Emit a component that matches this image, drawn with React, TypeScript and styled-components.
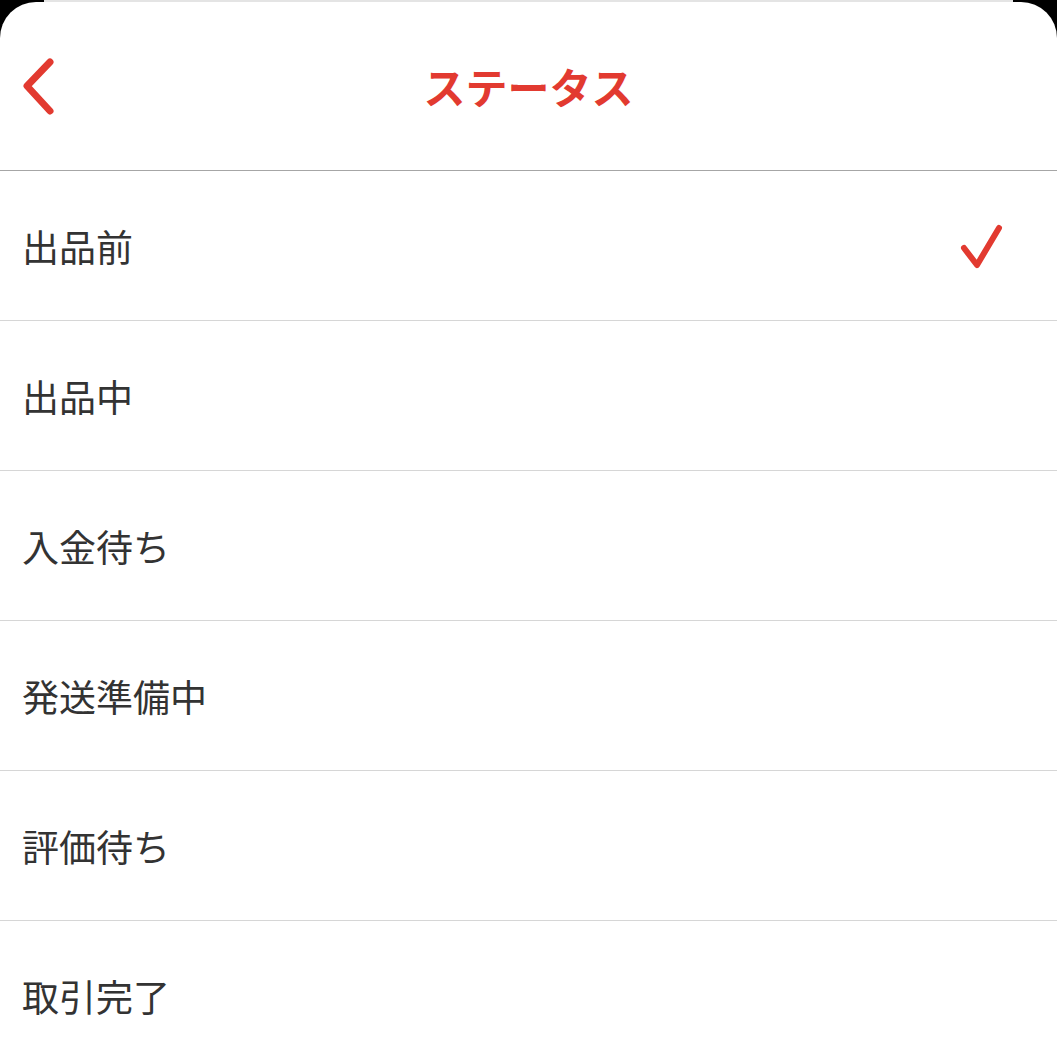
import styled, { createGlobalStyle } from "styled-components";

const RED = "#e23a30";

const statuses = ["出品前", "出品中", "入金待ち", "発送準備中", "評価待ち", "取引完了"];

const GlobalStyle = createGlobalStyle`
  html, body {
    margin: 0;
    padding: 0;
    background: #000;
  }
  body {
    font-family: "Noto Sans CJK JP", "Noto Sans", sans-serif;
  }
`;

export default function App() {
  const selected = 0;
  return (
    <>
      <GlobalStyle />
      <Screen>
        <BackSheet />
        <Sheet>
          <Header>
            <BackButton aria-label="back">
              <svg width="40" height="64" viewBox="0 0 40 64">
                <path
                  d="M28 7 L5 31 L28 56"
                  fill="none"
                  stroke={RED}
                  strokeWidth="7"
                  strokeLinecap="round"
                  strokeLinejoin="round"
                />
              </svg>
            </BackButton>
            <Title>ステータス</Title>
          </Header>
          <List>
            {statuses.map((s, i) => (
              <Row key={s}>
                <Label>{s}</Label>
                {i === selected && (
                  <svg width="50" height="50" viewBox="0 0 50 50">
                    <path
                      d="M6 26 L19 43 L41 6"
                      fill="none"
                      stroke={RED}
                      strokeWidth="6"
                      strokeLinecap="round"
                      strokeLinejoin="round"
                    />
                  </svg>
                )}
              </Row>
            ))}
          </List>
        </Sheet>
      </Screen>
    </>
  );
}

const Screen = styled.div`
  width: 1057px;
  height: 1057px;
  overflow: hidden;
  background: #000;
  display: flex;
  flex-direction: column;
`;

const BackSheet = styled.div`
  height: 2px;
  margin: 0 44px;
  background: #e4e4e4;
  flex-shrink: 0;
`;

const Sheet = styled.div`
  flex: 1;
  background: #fff;
  border-radius: 36px 36px 0 0;
  overflow: hidden;
`;

const Header = styled.header`
  position: relative;
  height: 168px;
  border-bottom: 1px solid #a6a6a6;
  display: flex;
  align-items: center;
  justify-content: center;
`;

const BackButton = styled.div`
  position: absolute;
  left: 22px;
  top: 53px;
  width: 40px;
  height: 64px;
  display: flex;
`;

const Title = styled.h1`
  margin: 0;
  margin-top: -2px;
  color: ${RED};
  font-size: 42px;
  font-weight: 700;
  letter-spacing: 0;
`;

const List = styled.ul`
  list-style: none;
  margin: 0;
  padding: 0;
`;

const Row = styled.li`
  height: 149px;
  border-bottom: 1px solid #d6d6d6;
  display: flex;
  align-items: center;
  justify-content: space-between;
  padding: 0 49px 0 22px;
  box-sizing: content-box;
  & > svg {
    margin-top: 2px;
  }
`;

const Label = styled.span`
  font-size: 37px;
  color: #333;
  line-height: 1;
  margin-top: 2px;
`;
